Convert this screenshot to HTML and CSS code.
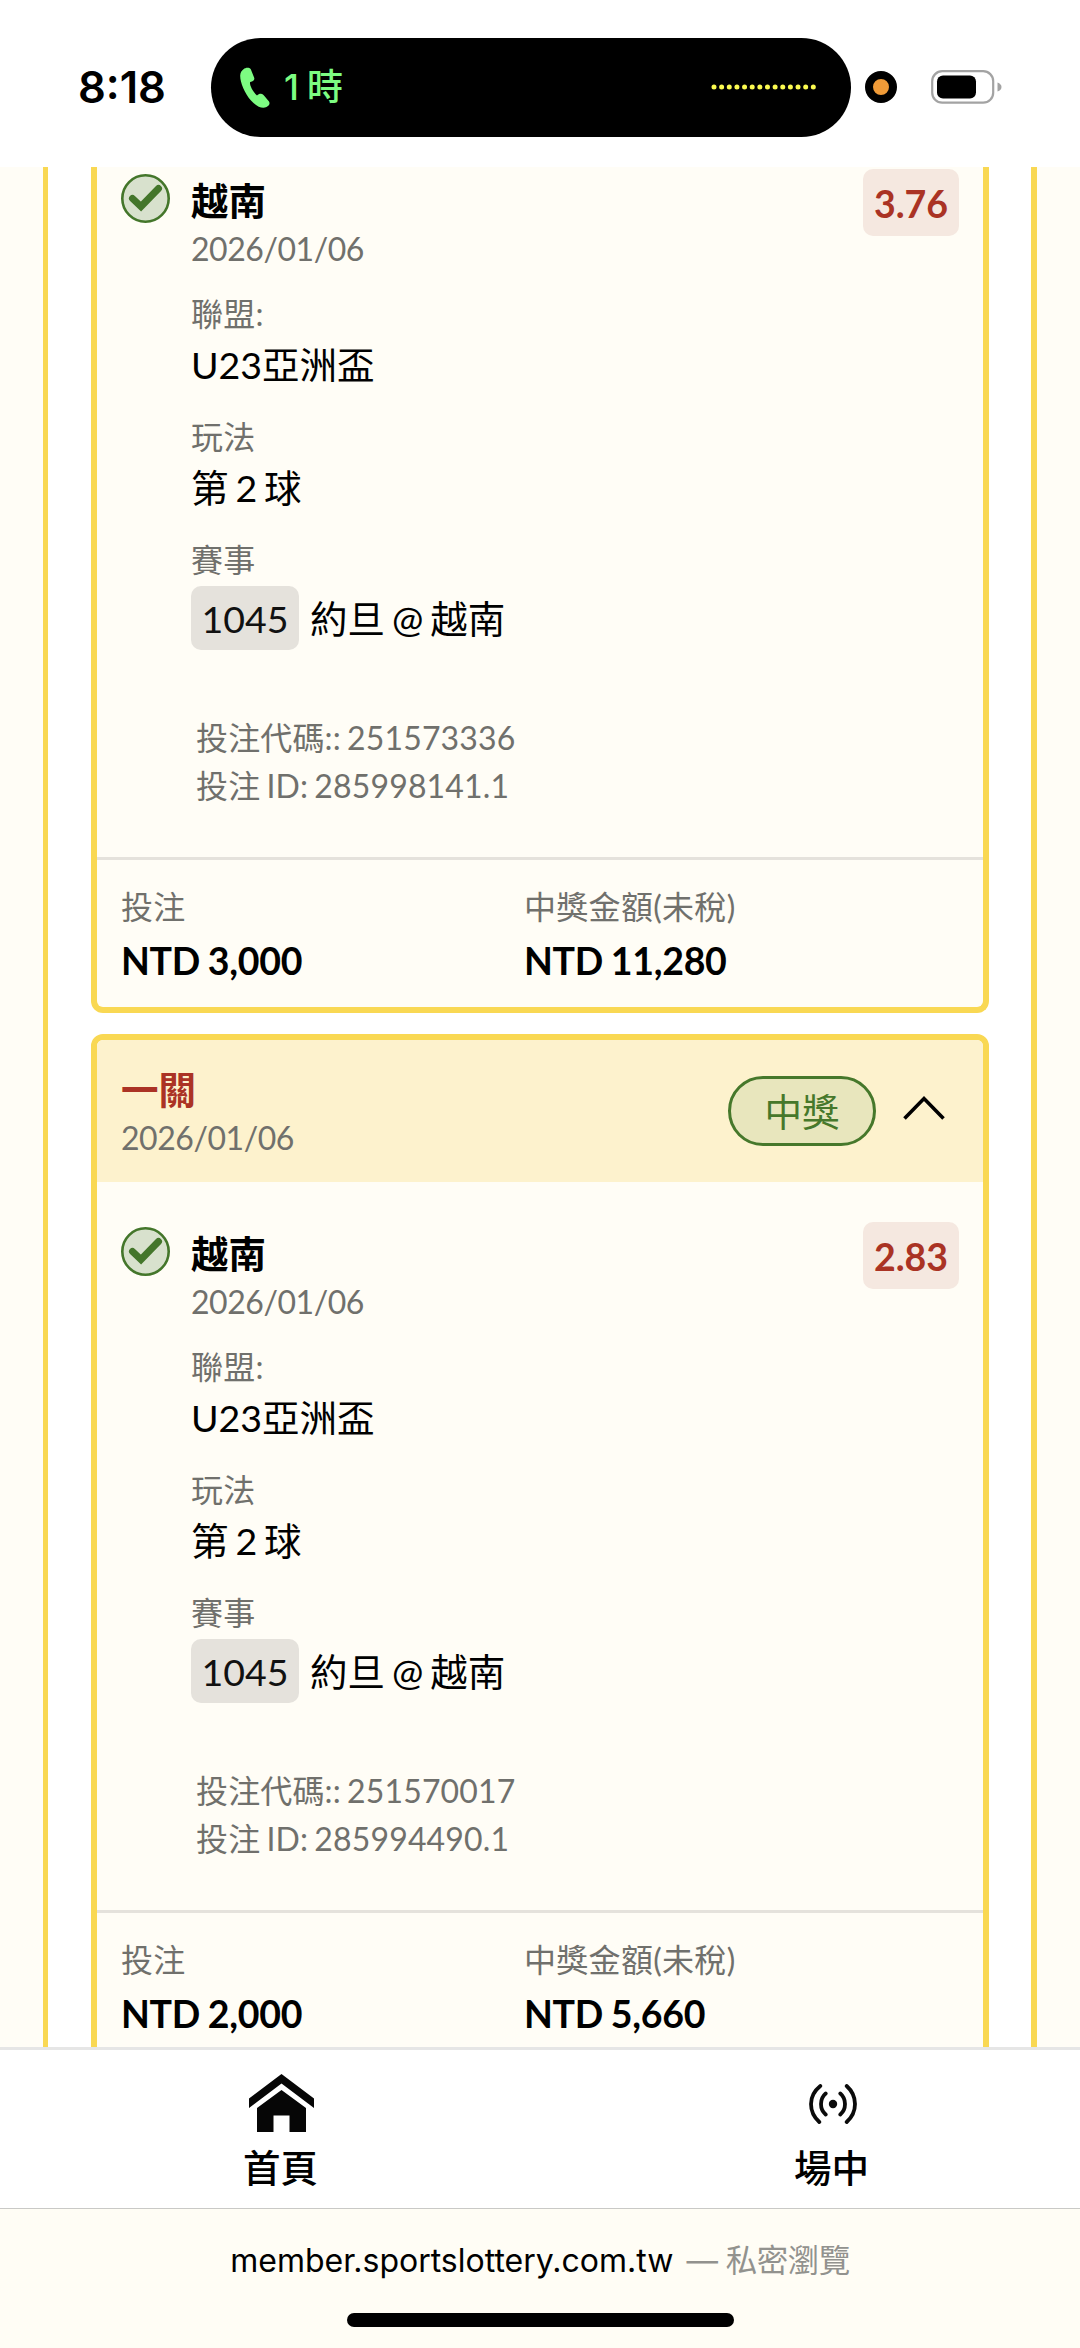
FILE: index.html
```html
<!DOCTYPE html>
<html lang="zh-Hant">
  <head>
    <meta charset="UTF-8" />
    <meta name="viewport" content="width=device-width, initial-scale=1.0" />
    <title>投注紀錄</title>
    <link rel="stylesheet" href="styles.css">
  </head>
  <body>
    <div class="screen">

      <header class="status-bar">
        <div class="clock">8:18</div>
        <div class="island">
          <svg class="phone" viewBox="0 0 30 41">
            <path d="M3.5 2.2C5.5.6 9 0 10.800 2.200L14.200 10.800C14.800 13 13.500 14.200 10.200 15C9 17 12.500 24.500 17 28.500C19 26.500 21.500 26 23.500 28L29 34.500C30.500 37 28.500 39 26.500 40C22 42 16.500 39.500 11 33.500C4.500 26 0 15 .2 8.500C.4 5.500 1.500 3.600 3.500 2.200Z" fill="#7dfc82"/>
          </svg>
          <span class="call-time">1<span class="unit">時</span></span>
          <svg class="dots" viewBox="0 0 105 6">
            <line x1="3" y1="3" x2="104" y2="3" stroke="#fcfb50" stroke-width="5" stroke-linecap="round" stroke-dasharray="0 7.64"/>
          </svg>
        </div>
        <div class="mic"></div>
        <svg class="battery" viewBox="0 0 71 34">
          <rect x="1.200" y="1.200" width="61" height="31.500" rx="10" fill="none" stroke="#a3a3a3" stroke-width="2.200"/>
          <rect x="6" y="5.500" width="39" height="23" rx="6" fill="#000"/>
          <path d="M66.500 12.500Q70.500 14 70.500 17T66.500 21.500Z" fill="#a3a3a3"/>
        </svg>
      </header>

      <main class="content">
        <div class="panel">

          <section class="card card-scrolled">
            <div class="bet">
              <svg class="check" viewBox="0 0 49 49">
                <circle cx="24.500" cy="24.500" r="23.200" fill="#d8e1cd" stroke="#44762b" stroke-width="2.600"/>
                <path d="M11.500 24.500L20 32.500L37.500 14.500" fill="none" stroke="#44762b" stroke-width="7" stroke-linecap="round"/>
              </svg>
              <div class="details">
                <h3 class="team">越南</h3>
                <p class="date">2026/01/06</p>
                <p class="label">聯盟:</p>
                <p class="value">U23亞洲盃</p>
                <p class="label">玩法</p>
                <p class="value">第 2 球</p>
                <p class="label">賽事</p>
                <p class="match"><span class="code">1045</span>約旦 @ 越南</p>
                <div class="ids">
                  <p>投注代碼:: 251573336</p>
                  <p>投注 ID: 285998141.1</p>
                </div>
              </div>
              <div class="odds">3.76</div>
            </div>
            <div class="totals">
              <div>
                <p class="label">投注</p>
                <p class="amount">NTD 3,000</p>
              </div>
              <div>
                <p class="label">中獎金額(未稅)</p>
                <p class="amount">NTD 11,280</p>
              </div>
            </div>
          </section>

          <section class="card">
            <div class="card-header">
              <div>
                <h3 class="kind">一關</h3>
                <p class="date">2026/01/06</p>
              </div>
              <span class="status">中獎</span>
              <svg class="chevron" viewBox="0 0 44 26">
                <path d="M2.500 23.500L22 3.500L41.500 23.500" fill="none" stroke="#000" stroke-width="3.600"/>
              </svg>
            </div>
            <div class="bet">
              <svg class="check" viewBox="0 0 49 49">
                <circle cx="24.500" cy="24.500" r="23.200" fill="#d8e1cd" stroke="#44762b" stroke-width="2.600"/>
                <path d="M11.500 24.500L20 32.500L37.500 14.500" fill="none" stroke="#44762b" stroke-width="7" stroke-linecap="round"/>
              </svg>
              <div class="details">
                <h3 class="team">越南</h3>
                <p class="date">2026/01/06</p>
                <p class="label">聯盟:</p>
                <p class="value">U23亞洲盃</p>
                <p class="label">玩法</p>
                <p class="value">第 2 球</p>
                <p class="label">賽事</p>
                <p class="match"><span class="code">1045</span>約旦 @ 越南</p>
                <div class="ids">
                  <p>投注代碼:: 251570017</p>
                  <p>投注 ID: 285994490.1</p>
                </div>
              </div>
              <div class="odds">2.83</div>
            </div>
            <div class="totals">
              <div>
                <p class="label">投注</p>
                <p class="amount">NTD 2,000</p>
              </div>
              <div>
                <p class="label">中獎金額(未稅)</p>
                <p class="amount">NTD 5,660</p>
              </div>
            </div>
          </section>

        </div>
      </main>

      <nav class="tabs">
        <a class="tab">
          <svg class="home" viewBox="0 0 65 58">
            <path d="M32.500 0L65 24.500V34L32.500 9.500L0 34V24.500Z" fill="#060606"/>
            <path d="M32.500 16L57 34V58H40.500V41.500H24.500V58H8V34Z" fill="#060606"/>
          </svg>
          <span>首頁</span>
        </a>
        <a class="tab">
          <svg class="live" viewBox="0 0 50 40">
            <circle cx="25" cy="20" r="4.200" fill="#0b0b0b"/>
            <path d="M12.300 2Q3 9.500 3 20T11.300 38M17.700 9.500Q13 13.500 13 20T17.700 30.500M32.300 9.500Q37 13.500 37 20T32.300 30.500M38.700 2Q47 9.500 47 20T38.700 38" fill="none" stroke="#0b0b0b" stroke-width="3.800" stroke-linecap="round"/>
          </svg>
          <span>場中</span>
        </a>
      </nav>

      <footer class="address-bar">
        <p class="url">member.sportslottery.com.tw<span class="private">— 私密瀏覽</span></p>
        <div class="home-indicator"></div>
      </footer>

    </div>
  </body>
</html>
```
FILE: styles.css
```css
* {
  padding: 0;
  margin: 0;
  box-sizing: border-box;
}

body {
  background: #ffffff;
  color: #000000;
  font-family: Lato, "Noto Sans CJK TC", sans-serif;
}

svg {
  display: block;
  flex-shrink: 0;
}

.screen {
  display: flex;
  flex-direction: column;
  width: 1080px;
  height: 2348px;
  overflow: hidden;
}

/* ---- STATUS BAR ---- */
.status-bar {
  display: flex;
  align-items: center;
  flex-shrink: 0;
  height: 167px;
  padding: 7px 0 0 78px;
  font-family: Inter, "Noto Sans CJK TC", sans-serif;
}

.status-bar > * {
  flex-shrink: 0;
}

.clock {
  width: 133px;
  font-size: 43.5px;
  font-weight: 600;
  line-height: 50px;
}

.island {
  display: flex;
  align-items: center;
  width: 640px;
  height: 99px;
  padding: 0 35px 0 29px;
  border-radius: 50px;
  background: #000000;
}

.phone {
  width: 30px;
  height: 41px;
}

.call-time {
  margin: -1px 0 0 14px;
  color: #7dfc82;
  font-size: 36px;
  font-weight: 500;
  line-height: 44px;
}

.unit {
  margin-left: 8px;
}

.dots {
  width: 105px;
  height: 6px;
  margin-left: auto;
}

.mic {
  width: 32px;
  height: 32px;
  margin-left: 14px;
  border: 8px solid #000000;
  border-radius: 50%;
  background: #f09b38;
}

.battery {
  width: 71px;
  height: 34px;
  margin-left: 34px;
}

/* ---- CONTENT ---- */
.content {
  flex: 1;
  min-height: 0;
  overflow: hidden;
  padding: 0 43px;
  background: #fffdf6;
}

.panel {
  display: flex;
  flex-direction: column;
  gap: 21px;
  padding: 0 42px 0 43px;
  border: solid #f9d853;
  border-width: 0 6px 0 5px;
  background: #ffffff;
}

.card {
  overflow: hidden;
  border: 6px solid #f9d853;
  border-radius: 12px;
  background: #fffdf6;
}

/* top of this card is scrolled under the status bar */
.card-scrolled {
  border-top: none;
  border-radius: 0 0 12px 12px;
}

.card-scrolled .bet {
  height: 690px;
  padding-top: 2px;
}

.card-header {
  display: flex;
  align-items: center;
  height: 142px;
  padding: 0 37px 0 24px;
  background: #fdf2cd;
}

.kind {
  margin-top: 1px;
  color: #ab3325;
  font-size: 37.5px;
  font-weight: 700;
  line-height: 45px;
}

.status {
  display: flex;
  align-items: center;
  justify-content: center;
  width: 148px;
  height: 70px;
  margin-left: auto;
  border: 3px solid #46782b;
  border-radius: 35px;
  background: #e8e6bd;
  color: #46782b;
  font-size: 37.5px;
  line-height: 45px;
}

.chevron {
  width: 44px;
  height: 26px;
  margin: -6px 0 0 26px;
}

.date {
  margin-top: 7px;
  color: #70706c;
  font-size: 32px;
  line-height: 38px;
  letter-spacing: -0.45px;
}

/* ---- BET ---- */
.bet {
  display: flex;
  align-items: flex-start;
  height: 728px;
  padding: 40px 24px 0;
}

.check {
  width: 49px;
  height: 49px;
  margin-top: 5px;
}

.details {
  flex: 1;
  margin: 9px 0 0 21px;
  word-spacing: -2.7px;
}

.team {
  font-size: 37.5px;
  font-weight: 700;
  line-height: 45px;
}

.label {
  color: #70706c;
  font-size: 32px;
  line-height: 38px;
  letter-spacing: 0.3px;
}

.details .label {
  margin-top: 27px;
}

.details .value {
  margin: 9px 0 31px;
  font-size: 37.5px;
  line-height: 45px;
}

.match {
  display: flex;
  align-items: center;
  height: 64px;
  margin-top: 7px;
  font-size: 37.5px;
  line-height: 45px;
}

.code {
  display: flex;
  align-items: center;
  justify-content: center;
  width: 108px;
  height: 64px;
  margin-right: 11px;
  border-radius: 10px;
  background: #e5e2dc;
  color: #111111;
}

.ids {
  margin: 64px 0 0 5px;
  color: #70706c;
  font-size: 32px;
  line-height: 48.4px;
  letter-spacing: 0.15px;
  word-spacing: -2.2px;
}

.odds {
  width: 96px;
  height: 67px;
  border-radius: 10px;
  background: #f5e8e0;
  color: #aa3324;
  font-size: 37.5px;
  font-weight: 700;
  line-height: 69px;
  text-align: center;
}

.totals {
  display: grid;
  grid-template-columns: 403px 1fr;
  height: 150px;
  padding: 28px 24px 0;
  border-top: 3px solid #e5e2dc;
}

.amount {
  margin-top: 12px;
  font-size: 37.5px;
  font-weight: 700;
  line-height: 45px;
  letter-spacing: -0.3px;
  word-spacing: -1px;
}

/* ---- BOTTOM TABS ---- */
.tabs {
  display: grid;
  grid-template-columns: 551px 551px;
  flex-shrink: 0;
  height: 162px;
  padding-left: 5px;
  border-top: 3px solid #e6e6e6;
  border-bottom: 1px solid #c9c9c6;
  background: #ffffff;
}

.tab {
  display: flex;
  flex-direction: column;
  align-items: center;
  font-size: 37.5px;
  font-weight: 500;
  line-height: 45px;
}

.home {
  width: 65px;
  height: 58px;
  margin: 24px 0 13px 2px;
}

.live {
  width: 50px;
  height: 40px;
  margin: 34px 0 21px 2px;
}

/* ---- ADDRESS BAR ---- */
.address-bar {
  display: flex;
  flex-direction: column;
  align-items: center;
  flex-shrink: 0;
  height: 139px;
  background: #fffdf5;
}

.url {
  margin-top: 31px;
  font-family: Inter, "Noto Sans CJK TC", sans-serif;
  font-size: 32px;
  line-height: 42px;
}

.private {
  margin-left: 13px;
  color: #92928e;
  font-size: 31.5px;
  letter-spacing: -0.5px;
}

.home-indicator {
  width: 387px;
  height: 14px;
  margin-top: 31px;
  border-radius: 7px;
  background: #000000;
}
```
